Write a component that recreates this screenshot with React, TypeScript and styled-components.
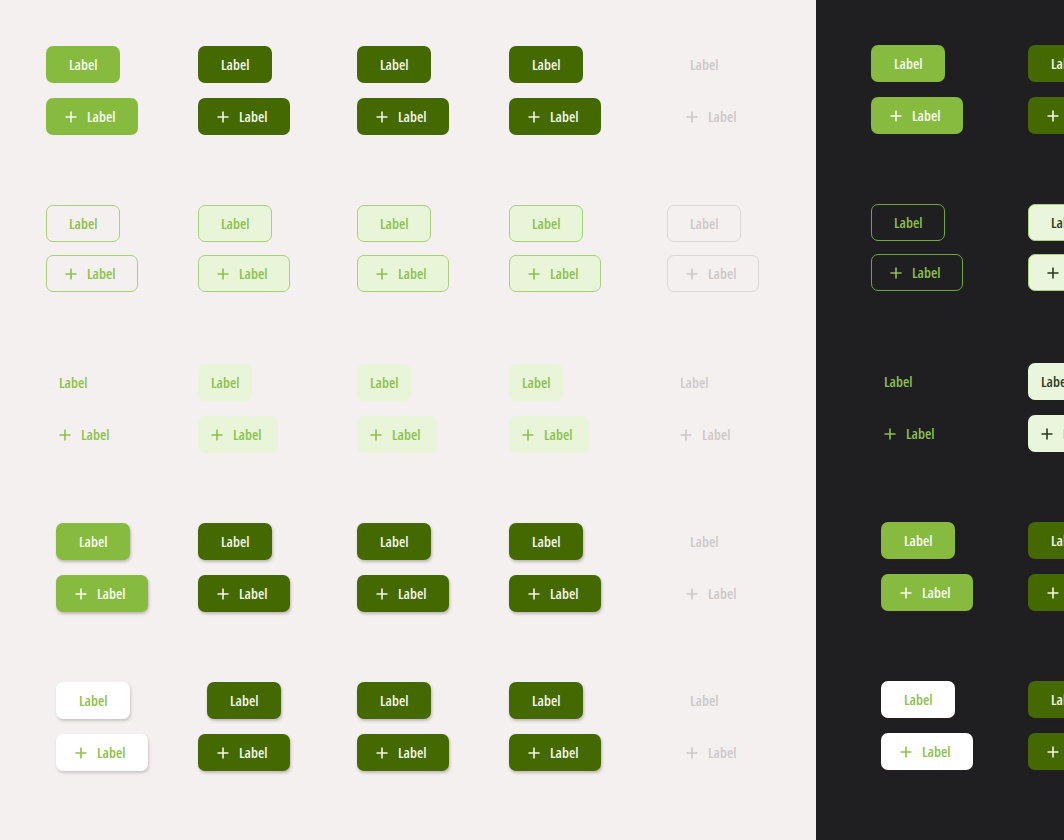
import React from 'react';
import styled, { createGlobalStyle, css } from 'styled-components';

const GlobalStyle = createGlobalStyle`
  html, body {
    margin: 0;
    padding: 0;
    background: #f4f0f0;
  }
  body {
    font-family: "Open Sans", "Noto Sans", sans-serif;
  }
`;

type Variant =
  | 'filled'
  | 'dark'
  | 'outlined'
  | 'outlinedTonal'
  | 'outlinedDisabled'
  | 'text'
  | 'tonal'
  | 'disabled'
  | 'elevated'
  | 'elevatedDark'
  | 'white'
  | 'nightOutlined'
  | 'nightOutlinedTonal'
  | 'nightTonal';

const variants: Record<Variant, ReturnType<typeof css>> = {
  filled: css`
    background: #86bb40;
    color: #f7fbef;
  `,
  dark: css`
    background: #436900;
    color: #f3f6ea;
  `,
  outlined: css`
    background: transparent;
    border-color: #a8d177;
    color: #8cc14d;
  `,
  outlinedTonal: css`
    background: #e8f5d9;
    border-color: #a8d177;
    color: #8cc14d;
  `,
  outlinedDisabled: css`
    background: transparent;
    border-color: #dcd7d7;
    color: #cdc8c8;
  `,
  text: css`
    background: transparent;
    color: #8cc14d;
  `,
  tonal: css`
    background: #e8f5d9;
    color: #8cc14d;
  `,
  disabled: css`
    background: transparent;
    color: #cdc8c8;
  `,
  elevated: css`
    background: #86bb40;
    color: #f7fbef;
    box-shadow: 1px 2px 3px rgba(60, 40, 40, 0.28);
  `,
  elevatedDark: css`
    background: #436900;
    color: #f3f6ea;
    box-shadow: 1px 2px 3px rgba(60, 40, 40, 0.28);
  `,
  white: css`
    background: #ffffff;
    color: #8cc14d;
    box-shadow: 1px 2px 3px rgba(60, 40, 40, 0.22);
  `,
  nightOutlined: css`
    background: transparent;
    border-color: #6ea838;
    color: #8cc14d;
  `,
  nightOutlinedTonal: css`
    background: #eaf6dc;
    border-color: #a8d177;
    color: #2c3a1f;
  `,
  nightTonal: css`
    background: #eaf6dc;
    color: #2c3a1f;
  `,
};

const Page = styled.div`
  display: flex;
  width: 1064px;
  height: 840px;
  overflow: hidden;
`;

const LightPanel = styled.section`
  width: 816px;
  flex-shrink: 0;
  box-sizing: border-box;
  padding: 46px 0 0 46px;
  background: #f4f0f0;
  display: flex;
  flex-direction: column;
  gap: 70px;
`;

const NightPanel = styled.section`
  flex: 1;
  box-sizing: border-box;
  padding: 45px 0 0 55px;
  background: #1f1e20;
  display: flex;
  flex-direction: column;
  gap: 70px;
  overflow: hidden;
`;

const Group = styled.div<{ $gap: number }>`
  height: 89px;
  display: flex;
  flex-direction: column;
  gap: ${(p) => p.$gap}px;
`;

const Row = styled.div<{ $cols: string }>`
  display: grid;
  grid-template-columns: ${(p) => p.$cols};
  height: 37px;
`;

const Cell = styled.div<{ $shift?: number }>`
  display: flex;
  padding-left: ${(p) => p.$shift ?? 0}px;
  white-space: nowrap;
`;

const Button = styled.button<{ $variant: Variant; $icon?: boolean; $compact?: boolean }>`
  box-sizing: border-box;
  height: 37px;
  display: inline-flex;
  align-items: center;
  gap: 10px;
  border: 1px solid transparent;
  border-radius: 7px;
  font-family: "Open Sans", "Noto Sans", sans-serif;
  font-stretch: 75%;
  font-size: 14.5px;
  font-weight: 600;
  letter-spacing: 0;
  cursor: pointer;
  padding: ${(p) =>
    p.$compact
      ? p.$icon
        ? '0 16px 0 12px'
        : '0 12px'
      : p.$icon
        ? '0 22px 0 18px'
        : '0 22px'};
  ${(p) => variants[p.$variant]}

  svg {
    flex-shrink: 0;
  }
`;

const PlusIcon = () => (
  <svg width="12" height="12" viewBox="0 0 12 12" fill="none">
    <path d="M6 0.5v11M0.5 6h11" stroke="currentColor" strokeWidth="1.6" />
  </svg>
);

type Spec = { v: Variant; compact?: boolean; shift?: number; shiftIcon?: number };
type GroupSpec = { gap: number; items: Spec[] };

const LIGHT_COLS = '152px 159px 152px 158px 1fr';
const NIGHT_COLS = '157px 1fr';

const lightGroups: GroupSpec[] = [
  {
    gap: 15,
    items: [{ v: 'filled' }, { v: 'dark' }, { v: 'dark' }, { v: 'dark' }, { v: 'disabled' }],
  },
  {
    gap: 13,
    items: [
      { v: 'outlined' },
      { v: 'outlinedTonal' },
      { v: 'outlinedTonal' },
      { v: 'outlinedTonal' },
      { v: 'outlinedDisabled' },
    ],
  },
  {
    gap: 15,
    items: [
      { v: 'text', compact: true },
      { v: 'tonal', compact: true },
      { v: 'tonal', compact: true },
      { v: 'tonal', compact: true },
      { v: 'disabled', compact: true },
    ],
  },
  {
    gap: 15,
    items: [
      { v: 'elevated', shift: 10, shiftIcon: 10 },
      { v: 'elevatedDark' },
      { v: 'elevatedDark' },
      { v: 'elevatedDark' },
      { v: 'disabled' },
    ],
  },
  {
    gap: 15,
    items: [
      { v: 'white', shift: 10, shiftIcon: 10 },
      { v: 'elevatedDark', shift: 9 },
      { v: 'elevatedDark' },
      { v: 'elevatedDark' },
      { v: 'disabled' },
    ],
  },
];

const nightGroups: GroupSpec[] = [
  { gap: 15, items: [{ v: 'filled' }, { v: 'dark' }] },
  { gap: 13, items: [{ v: 'nightOutlined' }, { v: 'nightOutlinedTonal' }] },
  { gap: 15, items: [{ v: 'text', compact: true }, { v: 'nightTonal', compact: true }] },
  { gap: 15, items: [{ v: 'elevated', shift: 10, shiftIcon: 10 }, { v: 'elevatedDark' }] },
  { gap: 15, items: [{ v: 'white', shift: 10, shiftIcon: 10 }, { v: 'elevatedDark' }] },
];

const ButtonGroup: React.FC<{ spec: GroupSpec; cols: string }> = ({ spec, cols }) => (
  <Group $gap={spec.gap}>
    <Row $cols={cols}>
      {spec.items.map((s, i) => (
        <Cell key={i} $shift={s.shift}>
          <Button $variant={s.v} $compact={s.compact}>
            Label
          </Button>
        </Cell>
      ))}
    </Row>
    <Row $cols={cols}>
      {spec.items.map((s, i) => (
        <Cell key={i} $shift={s.shiftIcon}>
          <Button $variant={s.v} $compact={s.compact} $icon>
            <PlusIcon />
            Label
          </Button>
        </Cell>
      ))}
    </Row>
  </Group>
);

const App: React.FC = () => {
  return (
    <>
      <GlobalStyle />
      <Page>
        <LightPanel>
          {lightGroups.map((g, i) => (
            <ButtonGroup key={i} spec={g} cols={LIGHT_COLS} />
          ))}
        </LightPanel>
        <NightPanel>
          {nightGroups.map((g, i) => (
            <ButtonGroup key={i} spec={g} cols={NIGHT_COLS} />
          ))}
        </NightPanel>
      </Page>
    </>
  );
};

export default App;
